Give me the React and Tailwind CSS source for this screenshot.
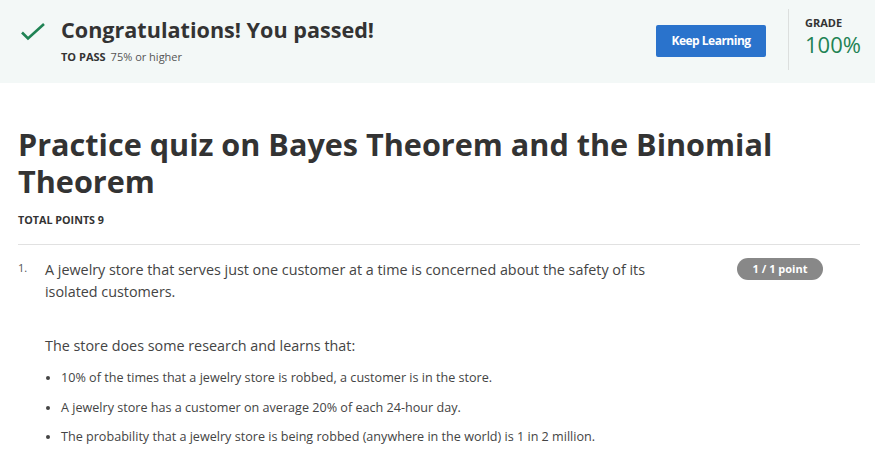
export default function App() {
  const facts = [
    '10% of the times that a jewelry store is robbed, a customer is in the store.',
    'A jewelry store has a customer on average 20% of each 24-hour day.',
    'The probability that a jewelry store is being robbed (anywhere in the world) is 1 in 2 million.',
  ]

  return (
    <div className="min-h-screen bg-white text-[#333] font-['Open_Sans',sans-serif]">
      <div className="h-[83px] bg-[#f3f8f7] flex items-start">
        <div className="shrink-0 w-[61px] pt-[23px] pl-[20px]">
          <svg width="28" height="20" viewBox="0 0 28 20" fill="none">
            <path d="M2 9.5 8 15.5 24 1" stroke="#1f8354" strokeWidth="2.6" />
          </svg>
        </div>
        <div className="pt-[15px] flex-1">
          <h2 className="text-[21.6px] font-bold leading-[30px] text-[#333]">Congratulations! You passed!</h2>
          <p className="mt-[4px] text-[11px] leading-[16px]">
            <span className="font-bold">TO PASS</span>
            <span className="ml-[5px] text-[#555]">75% or higher</span>
          </p>
        </div>
        <div className="pt-[25px] pr-[22px]">
          <button className="h-[32px] w-[110px] rounded-[2px] bg-[#2a73cc] text-white text-[12px] tracking-[-0.5px] font-bold">Keep Learning</button>
        </div>
        <div className="mt-[9px] h-[61px] w-px bg-[#dcdfde]" />
        <div className="pl-[16px] pt-[16px] w-[86px]">
          <p className="text-[11px] font-bold leading-[14px] text-[#333]">GRADE</p>
          <p className="text-[22px] leading-[28px] text-[#1f8354]">100%</p>
        </div>
      </div>

      <div className="pl-[18px] pr-[15px]">
        <h1 className="mt-[43px] text-[30.6px] font-bold leading-[37px] text-[#333] max-w-[800px]">
          Practice quiz on Bayes Theorem and the Binomial Theorem
        </h1>
        <p className="mt-[13px] text-[10.75px] font-bold leading-[14px]">TOTAL POINTS 9</p>
        <div className="mt-[17px] h-px bg-[#e1e1e1]" />

        <div className="mt-[14px] flex">
          <span className="w-[27px] pt-[2px] text-[11px] leading-[14px] text-[#555]">1.</span>
          <div className="flex-1">
            <div className="flex items-start">
              <p className="w-[630px] text-[14.35px] leading-[22px] text-[#444]">
                A jewelry store that serves just one customer at a time is concerned about the safety of its isolated customers.
              </p>
              <span className="ml-[62px] mt-[-1px] h-[22px] w-[86px] rounded-full bg-[#888] text-white text-[11px] font-bold flex items-center justify-center">1 / 1 point</span>
            </div>
            <p className="mt-[31px] text-[14.35px] leading-[23px] text-[#444]">The store does some research and learns that:</p>
            <ul className="mt-[12px] list-disc pl-[16px] text-[12.6px] leading-[18px] text-[#444] flex flex-col gap-[11.5px]">
              {facts.map((f) => (
                <li key={f}>{f}</li>
              ))}
            </ul>
          </div>
        </div>
      </div>
    </div>
  )
}
